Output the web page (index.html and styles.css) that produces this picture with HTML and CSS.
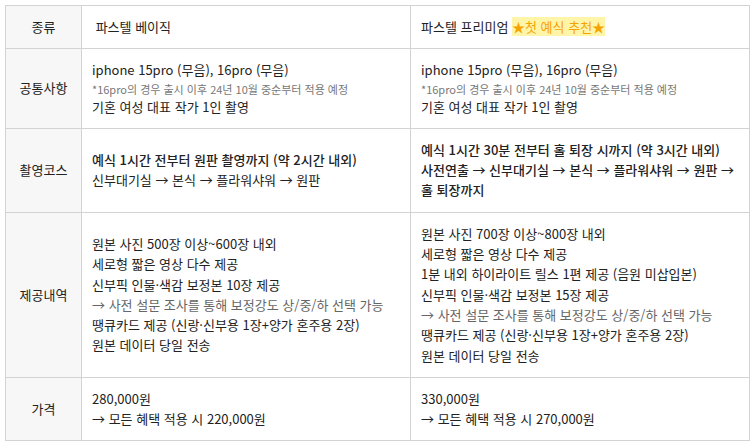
FILE: index.html
```html
<!DOCTYPE html>
<html lang="ko">
<head>
<meta charset="utf-8">
<link rel="stylesheet" href="styles.css">
</head>
<body>
<div class="wrap">
<table class="plan">
  <colgroup>
    <col class="c1"><col class="c2"><col class="c3">
  </colgroup>
  <tr>
    <th>종류</th>
    <td>&nbsp;파스텔 베이직</td>
    <td>파스텔 프리미엄 <span class="hl">★첫 예식 추천★</span></td>
  </tr>
  <tr>
    <th>공통사항</th>
    <td>
      <div>iphone 15pro (무음), 16pro (무음)</div>
      <div class="note">*16pro의 경우 출시 이후 24년 10월 중순부터 적용 예정</div>
      <div>기혼 여성 대표 작가 1인 촬영</div>
    </td>
    <td>
      <div>iphone 15pro (무음), 16pro (무음)</div>
      <div class="note">*16pro의 경우 출시 이후 24년 10월 중순부터 적용 예정</div>
      <div>기혼 여성 대표 작가 1인 촬영</div>
    </td>
  </tr>
  <tr class="course">
    <th>촬영코스</th>
    <td>
      <div class="b">예식 1시간 전부터 원판 촬영까지 (약 2시간 내외)</div>
      <div>신부대기실 → 본식 → 플라워샤워 → 원판</div>
    </td>
    <td class="b">
      <div>예식 1시간 30분 전부터 홀 퇴장 시까지 (약 3시간 내외)</div>
      <div>사전연출 → 신부대기실 → 본식 → 플라워샤워 → 원판 →<br>홀 퇴장까지</div>
    </td>
  </tr>
  <tr>
    <th>제공내역</th>
    <td>
      <div>원본 사진 500장 이상~600장 내외</div>
      <div>세로형 짧은 영상 다수 제공</div>
      <div>신부픽 인물·색감 보정본 10장 제공</div>
      <div class="gray">→ 사전 설문 조사를 통해 보정강도 상/중/하 선택 가능</div>
      <div>땡큐카드 제공 (신랑·신부용 1장+양가 혼주용 2장)</div>
      <div>원본 데이터 당일 전송</div>
    </td>
    <td>
      <div>원본 사진 700장 이상~800장 내외</div>
      <div>세로형 짧은 영상 다수 제공</div>
      <div>1분 내외 하이라이트 릴스 1편 제공 (음원 미삽입본)</div>
      <div>신부픽 인물·색감 보정본 15장 제공</div>
      <div class="gray">→ 사전 설문 조사를 통해 보정강도 상/중/하 선택 가능</div>
      <div>땡큐카드 제공 (신랑·신부용 1장+양가 혼주용 2장)</div>
      <div>원본 데이터 당일 전송</div>
    </td>
  </tr>
  <tr>
    <th>가격</th>
    <td>
      <div>280,000원</div>
      <div>→ 모든 혜택 적용 시 220,000원</div>
    </td>
    <td>
      <div>330,000원</div>
      <div>→ 모든 혜택 적용 시 270,000원</div>
    </td>
  </tr>
</table>
</div>
</body>
</html>
```

FILE: styles.css
```css
html, body {
  margin: 0;
  padding: 0;
  background: #ffffff;
}
body {
  font-family: "Noto Sans CJK KR", "Noto Sans", sans-serif;
  font-size: 13px;
  color: #222222;
}
.wrap {
  padding: 5px 0 0 5px;
}
.plan {
  border-collapse: collapse;
  table-layout: fixed;
  width: 744px;
}
.c1 { width: 76px; }
.c2 { width: 329px; }
.c3 { width: 339px; }
.plan th,
.plan td {
  border: 1px solid #d3d3d3;
  padding: 11px 10px;
  line-height: 20.3px;
  vertical-align: middle;
  text-align: left;
  white-space: nowrap;
}
.plan th {
  background: #f7f7f7;
  font-weight: 400;
  text-align: center;
  padding-left: 4px;
  padding-right: 4px;
}
.note {
  font-size: 11px;
  line-height: 16px;
  color: #777777;
}
.gray {
  color: #666666;
}
.b {
  font-weight: 500;
}
.hl {
  background: #fff5a8;
  color: #f5a300;
}
```
